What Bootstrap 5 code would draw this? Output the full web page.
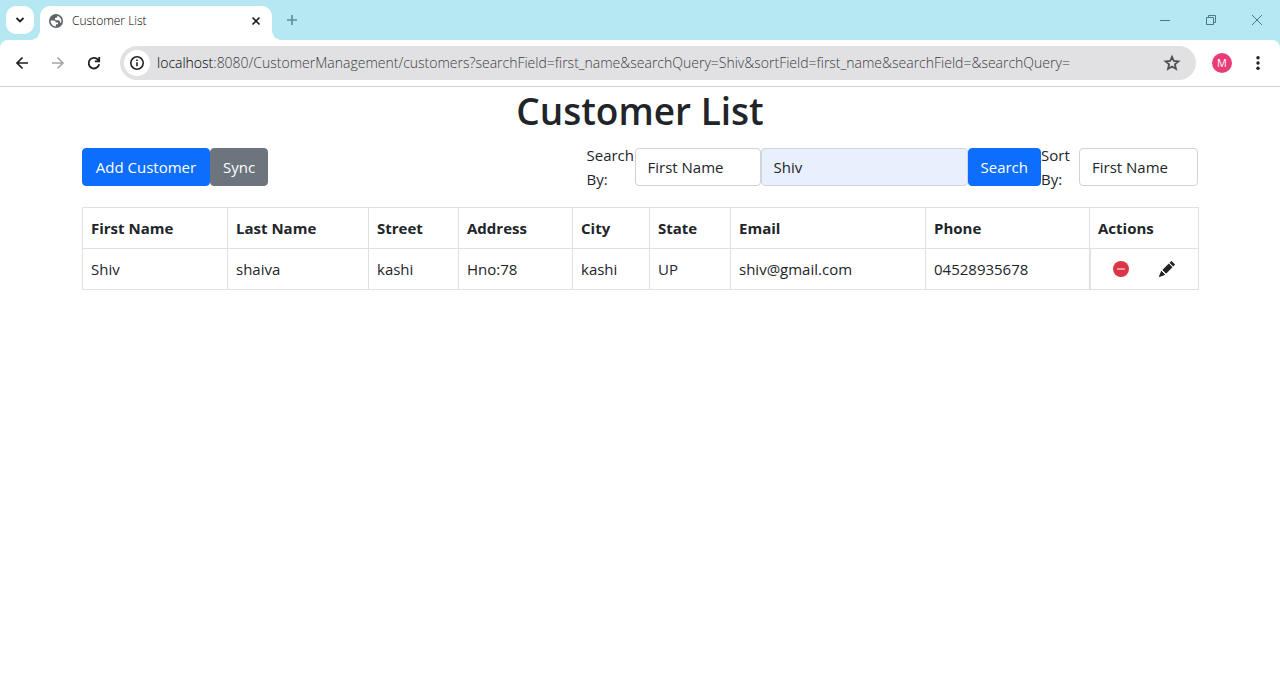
<!DOCTYPE html>
<html lang="en">
<head>
<meta charset="utf-8">
<meta name="viewport" content="width=device-width, initial-scale=1">
<title>Customer List</title>
<link href="https://cdn.jsdelivr.net/npm/bootstrap@5.3.0/dist/css/bootstrap.min.css" rel="stylesheet">
<style>
  body { font-family: "Open Sans", "Noto Sans", sans-serif; font-size: 15px; line-height: 24px; }
  svg { display: block; }
  .icon-btn { border: 0; padding: 0; background: transparent; color: #202124; display: flex; align-items: center; justify-content: center; flex: none; }

  /* Browser frame */
  .tab-strip { background: #b5e8f2; height: 40px; padding: 6px 0 0 6px; }
  .tab-menu { width: 28px; height: 28px; border-radius: 10px; background: #fff; }
  .page-tab { position: relative; width: 232px; height: 34px; margin-left: 6px; padding: 0 8px; background: #fff; border-radius: 10px 10px 0 0; font-size: 12px; font-weight: 300; color: #000; }
  .page-tab::before, .page-tab::after { content: ""; position: absolute; bottom: 0; width: 10px; height: 10px; }
  .page-tab::before { left: -10px; background: radial-gradient(circle at 0 0, transparent 10px, #fff 10px); }
  .page-tab::after { right: -10px; background: radial-gradient(circle at 100% 0, transparent 10px, #fff 10px); }
  .new-tab { width: 40px; height: 28px; color: #5f8c96; }
  .win-btn { width: 46px; height: 28px; color: #4f7780; }
  .toolbar-wrap { background: #b5e8f2; }
  .toolbar { height: 47px; background: #fff; border-bottom: 1px solid #d0d1d3; border-radius: 8px 8px 0 0; padding: 0 4px; }
  .tool-btn { width: 36px; height: 34px; }
  .address-bar { height: 34px; margin-left: 8px; padding: 0 6px 0 4px; border-radius: 17px; background: #e1e1e3; min-width: 0; }
  .site-info { width: 26px; height: 26px; border-radius: 50%; background: #fff; }
  .url { min-width: 0; margin-left: 7px; font-size: 14px; font-weight: 300; color: #3c4043; white-space: nowrap; overflow: hidden; }
  .url b { font-weight: 300; color: #000; }
  .profile { width: 20px; height: 20px; margin: 0 8px 0 16px; border-radius: 50%; background: #ea3c77; color: #fff; font-size: 11px; line-height: 20px; }

  /* Customer page */
  .page-title { font-size: 37px; line-height: 48px; font-weight: 600; color: #212529; }
  .btn, .form-control { font-size: 15px; line-height: 24px; border-radius: 4px; }
  .btn { padding: 6px 12px; }
  .add-btn { width: 128px; }
  .form-control { border-color: #ced4da; }
  .search-label { width: 48px; }
  .sort-label { width: 38px; }
  .search-field { width: 126px; }
  .search-query, .search-query:focus { width: 207px; background: #e8f0fe; }
  .sort-field { width: 119px; }
  .customer-table { table-layout: fixed; --bs-border-color: #dee2e6; }
  .customer-table .action-cell { box-shadow: inset 1px 0 #dee2e6; }
</style>
</head>
<body>
<header>
  <div class="tab-strip d-flex">
    <button class="icon-btn tab-menu" aria-label="Search tabs"><svg width="10" height="10" viewBox="0 0 10 10" fill="none" stroke="currentColor" stroke-width="1.8"><path d="M1.5 3 5 6.500 8.500 3"/></svg></button>
    <div class="page-tab d-flex align-items-center">
      <svg class="flex-shrink-0 mb-1" width="16" height="16" viewBox="0 0 16 16"><circle cx="8" cy="8" r="7" fill="#5f6368"/><path fill="#fff" d="M2.600 7.500h2.700c1.500 0 2.500.8 2.500 1.900H10v1.800H7.900v2.200c-3 0-5.400-2.500-5.300-5.900ZM9.300 2.800c2.300.6 4.100 2.700 4.100 5.100 0 .9-.2 1.500-.5 2.100-.6-.1-1-.5-1-1.200 0-1-.6-1.500-1.600-1.500H8.200c-.9 0-1.300-.5-1.300-1.200 0-.8.5-1.300 1.300-1.300.8 0 1.100-.5 1.100-2Z"/></svg>
      <span class="ms-2 mb-1 flex-grow-1">Customer List</span>
      <button class="icon-btn mb-1" aria-label="Close tab"><svg width="16" height="16" viewBox="0 0 16 16" stroke="currentColor" stroke-width="1.700"><path d="m4.500 4.500 7 7m0-7-7 7"/></svg></button>
    </div>
    <button class="icon-btn new-tab" aria-label="New tab"><svg width="12" height="12" viewBox="0 0 12 12" stroke="currentColor" stroke-width="1.600"><path d="M6 1v10M1 6h10"/></svg></button>
    <div class="d-flex ms-auto">
      <button class="icon-btn win-btn" aria-label="Minimize"><svg width="12" height="12" viewBox="0 0 12 12" stroke="currentColor"><path d="M1 6.500h10"/></svg></button>
      <button class="icon-btn win-btn" aria-label="Restore"><svg width="12" height="12" viewBox="0 0 12 12" fill="none" stroke="currentColor"><path d="M1.500 3.500h7v7h-7zM3.500 3.500v-2h7v7h-2"/></svg></button>
      <button class="icon-btn win-btn" aria-label="Close"><svg width="12" height="12" viewBox="0 0 12 12" stroke="currentColor"><path d="m1 1 10 10m0-10L1 11"/></svg></button>
    </div>
  </div>
  <div class="toolbar-wrap">
    <div class="toolbar d-flex align-items-center">
      <button class="icon-btn tool-btn" aria-label="Back"><svg width="16" height="16" viewBox="0 0 16 16" fill="none" stroke="currentColor" stroke-width="1.700"><path d="M14 8H3m5.500-5.500L3 8l5.500 5.500"/></svg></button>
      <button class="icon-btn tool-btn" aria-label="Forward" disabled><svg width="16" height="16" viewBox="0 0 16 16" fill="none" stroke="#a3a5a8" stroke-width="1.600"><path d="M2 8h11M7.500 2.500 13 8l-5.500 5.500"/></svg></button>
      <button class="icon-btn tool-btn" aria-label="Reload"><svg width="16" height="16" viewBox="0 0 16 16" fill="none" stroke="currentColor" stroke-width="1.800"><path d="M12.600 5.500A5.300 5.300 0 1 0 13.200 9.200M13.200 2v4.400H8.800"/></svg></button>
      <div class="address-bar d-flex align-items-center flex-grow-1">
        <button class="icon-btn site-info" aria-label="Site information"><svg width="16" height="16" viewBox="0 0 16 16" fill="none" stroke="currentColor" stroke-width="1.600"><circle cx="8" cy="8" r="6.200"/><path d="M8 7.200v4M8 4.500v1.600"/></svg></button>
        <div class="url flex-grow-1"><b>localhost</b>:8080/CustomerManagement/customers?searchField=first_name&amp;searchQuery=Shiv&amp;sortField=first_name&amp;searchField=&amp;searchQuery=</div>
        <button class="icon-btn tool-btn" aria-label="Bookmark"><svg width="18" height="18" viewBox="0 0 18 18" fill="none" stroke="#4d5054" stroke-width="1.800"><path d="m9 2.800 1.800 4.200 4.600.4-3.500 3 1.100 4.500L9 12.500l-4 2.400 1.100-4.500-3.500-3 4.600-.4Z"/></svg></button>
      </div>
      <button class="icon-btn profile" aria-label="Profile">M</button>
      <button class="icon-btn tool-btn" aria-label="Menu"><svg width="16" height="16" viewBox="0 0 16 16" fill="currentColor"><circle cx="8" cy="2.800" r="1.700"/><circle cx="8" cy="8" r="1.700"/><circle cx="8" cy="13.200" r="1.700"/></svg></button>
    </div>
  </div>
</header>

<main class="container">
  <h1 class="page-title text-center mb-2">Customer List</h1>
  <div class="d-flex align-items-center justify-content-between mb-3">
    <div class="d-flex">
      <a href="#add" class="btn btn-primary add-btn">Add Customer</a>
      <button type="button" class="btn btn-secondary">Sync</button>
    </div>
    <div class="d-flex">
      <form class="d-flex align-items-center">
        <label class="search-label" for="searchField">Search By:</label>
        <select class="form-control search-field" id="searchField"><option>First Name</option><option>City</option><option>Email</option><option>Phone</option></select>
        <input class="form-control search-query" type="text" value="Shiv" aria-label="Search query">
        <button type="submit" class="btn btn-primary">Search</button>
      </form>
      <form class="d-flex align-items-center">
        <label class="sort-label" for="sortField">Sort By:</label>
        <select class="form-control sort-field" id="sortField"><option>First Name</option><option>City</option><option>Email</option><option>Phone</option></select>
      </form>
    </div>
  </div>
  <table class="table table-bordered customer-table">
    <colgroup>
      <col style="width:145px"><col style="width:141px"><col style="width:90px"><col style="width:114px"><col style="width:77px"><col style="width:81px"><col style="width:195px"><col style="width:164px"><col style="width:109px">
    </colgroup>
    <thead>
      <tr><th>First Name</th><th>Last Name</th><th>Street</th><th>Address</th><th>City</th><th>State</th><th>Email</th><th>Phone</th><th>Actions</th></tr>
    </thead>
    <tbody>
      <tr>
        <td>Shiv</td><td>shaiva</td><td>kashi</td><td>Hno:78</td><td>kashi</td><td>UP</td><td>shiv@gmail.com</td><td>04528935678</td>
        <td class="action-cell">
          <div class="d-flex justify-content-around align-items-center">
            <button class="icon-btn my-1" aria-label="Delete"><svg width="16" height="16" viewBox="0 0 16 16"><circle cx="8" cy="8" r="8" fill="#dc3545"/><path d="M4.500 8h7" stroke="#fff" stroke-linecap="round"/></svg></button>
            <button class="icon-btn my-1" aria-label="Edit"><svg width="16" height="16" viewBox="0 0 16 16" fill="#212529"><path d="M12.854.146a.5.5 0 0 0-.707 0L10.500 1.793 14.207 5.500l1.647-1.646a.5.5 0 0 0 0-.708zm.646 6.061L9.793 2.500 3.293 9H3.500a.5.5 0 0 1 .5.5v.5h.5a.5.5 0 0 1 .5.5v.5h.5a.5.5 0 0 1 .5.5v.5h.5a.5.5 0 0 1 .5.5v.207zm-7.468 7.468A.5.5 0 0 1 6 13.500V13h-.5a.5.5 0 0 1-.5-.5V12h-.5a.5.5 0 0 1-.5-.5V11h-.5a.5.5 0 0 1-.5-.5V10h-.5a.5.5 0 0 1-.175-.032l-.179.178a.5.5 0 0 0-.11.168l-2 5a.5.5 0 0 0 .65.65l5-2a.5.5 0 0 0 .168-.11z"/></svg></button>
          </div>
        </td>
      </tr>
    </tbody>
  </table>
</main>
<script src="https://cdn.jsdelivr.net/npm/bootstrap@5.3.0/dist/js/bootstrap.bundle.min.js"></script>
</body>
</html>
